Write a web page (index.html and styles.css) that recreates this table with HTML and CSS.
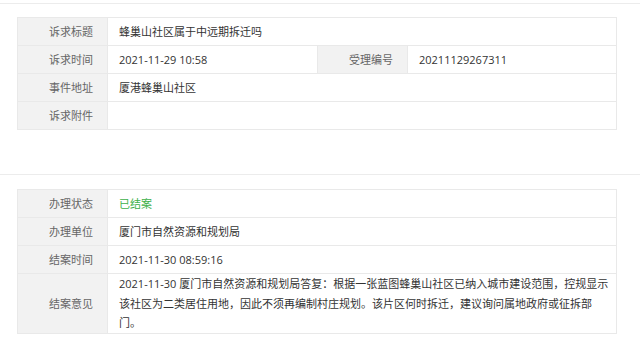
FILE: index.html
```html
<!DOCTYPE html>
<html lang="zh-CN">
<head>
<meta charset="utf-8">
<title>诉求详情</title>
<link rel="stylesheet" href="styles.css">
</head>
<body>
  <section class="panel">
    <table class="info">
      <colgroup>
        <col class="c-label"><col class="c-value"><col class="c-label"><col>
      </colgroup>
      <tr>
        <th>诉求标题</th>
        <td colspan="3">蜂巢山社区属于中远期拆迁吗</td>
      </tr>
      <tr>
        <th>诉求时间</th>
        <td>2021-11-29 10:58</td>
        <th>受理编号</th>
        <td>20211129267311</td>
      </tr>
      <tr>
        <th>事件地址</th>
        <td colspan="3">厦港蜂巢山社区</td>
      </tr>
      <tr>
        <th>诉求附件</th>
        <td colspan="3"></td>
      </tr>
    </table>
  </section>

  <section class="panel">
    <table class="info">
      <colgroup>
        <col class="c-label"><col>
      </colgroup>
      <tr>
        <th>办理状态</th>
        <td class="done">已结案</td>
      </tr>
      <tr>
        <th>办理单位</th>
        <td>厦门市自然资源和规划局</td>
      </tr>
      <tr>
        <th>结案时间</th>
        <td>2021-11-30 08:59:16</td>
      </tr>
      <tr>
        <th>结案意见</th>
        <td class="long">2021-11-30 厦门市自然资源和规划局答复：根据一张蓝图蜂巢山社区已纳入城市建设范围，控规显示该社区为二类居住用地，因此不须再编制村庄规划。该片区何时拆迁，建议询问属地政府或征拆部门。</td>
      </tr>
    </table>
  </section>
</body>
</html>
```

FILE: styles.css
```css
html, body {
  margin: 0;
  padding: 0;
  background: #ffffff;
}

body {
  padding-top: 3px;
  font-family: "Open Sans", "Noto Sans CJK SC", "Microsoft YaHei", sans-serif;
  font-size: 11px;
  color: #333333;
}

.panel {
  border-top: 1px solid #ececec;
  padding: 13px 23px 44px 17px;
}

.panel + .panel {
  padding-top: 14px;
}

.panel:last-child {
  padding-bottom: 8px;
}

.info {
  width: 600px;
  border-collapse: collapse;
  table-layout: fixed;
}

.c-label {
  width: 90px;
}

.c-value {
  width: 210px;
}

.info th,
.info td {
  border: 1px solid #e9e9e9;
  height: 27px;
  padding: 0;
  line-height: 27px;
  vertical-align: middle;
}

.info th {
  background: #f2f2f2;
  color: #666666;
  font-weight: normal;
  text-align: right;
  padding-right: 14px;
}

.info td {
  text-align: left;
  padding-left: 11px;
}

.info td.done {
  color: #3db04a;
}

.info td.long {
  line-height: 19.5px;
  padding: 0 4px 0 11px;
}
```
